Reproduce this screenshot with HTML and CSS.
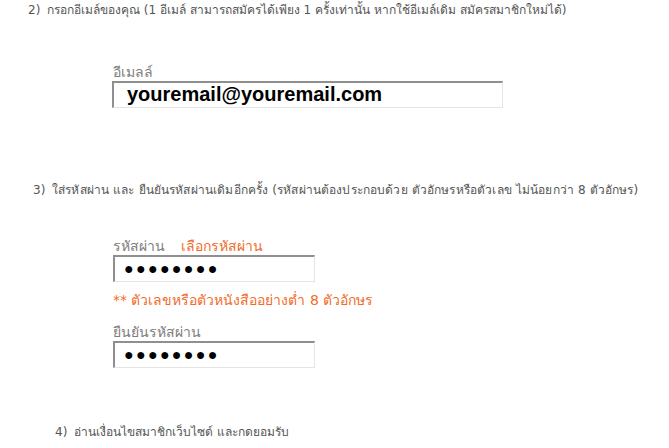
FILE: index.html
```html
<!DOCTYPE html>
<html>
<head>
<meta charset="utf-8">
<link rel="stylesheet" href="styles.css">
</head>
<body>
<div class="page">
  <p class="step step2"><span class="num">2)</span>กรอกอีเมล์ของคุณ (1 อีเมล์ สามารถสมัครได้เพียง 1 ครั้งเท่านั้น หากใช้อีเมล์เดิม สมัครสมาชิกใหม่ได้)</p>
  <div class="form form-email">
    <div class="label">อีเมลล์</div>
    <div class="box box-email">youremail@youremail.com</div>
  </div>
  <p class="step step3"><span class="num">3)</span>ใส่รหัสผ่าน และ ยืนยันรหัสผ่านเดิมอีกครั้ง (รหัสผ่านต้องประกอบด้วย ตัวอักษรหรือตัวเลข ไม่น้อยกว่า 8 ตัวอักษร)</p>
  <div class="form form-pass">
    <div class="label">รหัสผ่าน <span class="hint">เลือกรหัสผ่าน</span></div>
    <div class="box box-pass">●●●●●●●●</div>
    <div class="warn">** ตัวเลขหรือตัวหนังสืออย่างต่ำ 8 ตัวอักษร</div>
    <div class="label">ยืนยันรหัสผ่าน</div>
    <div class="box box-pass">●●●●●●●●</div>
  </div>
  <p class="step step4"><span class="num">4)</span>อ่านเงื่อนไขสมาชิกเว็บไซด์ และกดยอมรับ</p>
</div>
</body>
</html>
```

FILE: styles.css
```css
html, body {
  margin: 0;
  padding: 0;
  background: #fff;
}
body {
  font-family: Tahoma, "DejaVu Sans", "Noto Sans", sans-serif;
}
.page {
  display: flex;
  flex-direction: column;
}
.step {
  margin: 0;
  font-size: 12px;
  color: #555;
  line-height: 20px;
}
.num {
  display: inline-block;
  width: 19px;
}
.step2 { padding: 0 0 0 28px; margin-top: 0; }
.step3 { padding-left: 33px; margin-top: 72px; letter-spacing: 0.15px; }
.step4 { padding-left: 55px; margin-top: 54px; }
.form {
  display: flex;
  flex-direction: column;
  padding-left: 113px;
}
.form-email { margin-top: 43px; }
.form-pass { margin-top: 37px; }
.label {
  font-size: 14px;
  color: #7d7d7d;
  line-height: 18px;
}
.hint {
  color: #f26b2a;
  margin-left: 12px;
}
.box {
  box-sizing: border-box;
  height: 27px;
  border-top: 2px solid #8f8f8f;
  border-left: 2px solid #8f8f8f;
  border-right: 1px solid #e4e4e4;
  border-bottom: 1px solid #e4e4e4;
  color: #000;
}
.box-email {
  width: 391px;
  margin-left: -1px;
  font-family: "Liberation Sans", Arial, sans-serif;
  font-weight: bold;
  font-size: 20px;
  line-height: 23px;
  padding-left: 13px;
}
.box-pass {
  width: 202px;
  font-family: "Liberation Sans", Arial, sans-serif;
  font-size: 16px;
  line-height: 23px;
  padding-left: 9px;
  letter-spacing: 2.3px;
}
.warn {
  font-size: 14px;
  color: #f26b2a;
  line-height: 18px;
  margin-top: 9px;
  margin-bottom: 14px;
}
```
